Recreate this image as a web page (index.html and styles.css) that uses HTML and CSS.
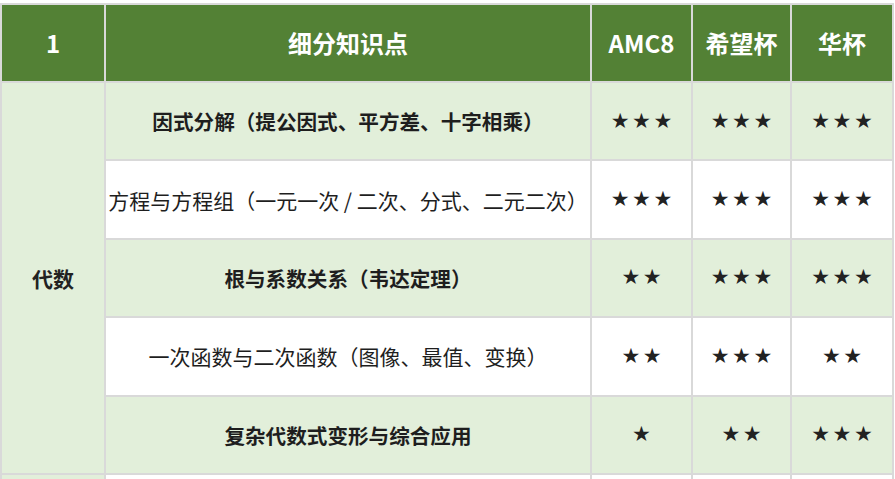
FILE: index.html
```html
<!DOCTYPE html>
<html lang="zh-CN">
<head>
<meta charset="utf-8">
<title>知识点难度表</title>
<link rel="stylesheet" href="styles.css">
</head>
<body>
<table class="grid">
  <colgroup>
    <col class="c-cat">
    <col class="c-topic">
    <col class="c-amc">
    <col class="c-xw">
    <col class="c-hb">
  </colgroup>
  <thead>
    <tr class="head">
      <th>1</th>
      <th>细分知识点</th>
      <th>AMC8</th>
      <th>希望杯</th>
      <th>华杯</th>
    </tr>
  </thead>
  <tbody>
    <tr class="tint">
      <td class="cat" rowspan="5">代数</td>
      <td class="topic strong">因式分解（提公因式、平方差、十字相乘）</td>
      <td class="stars">★★★</td>
      <td class="stars">★★★</td>
      <td class="stars">★★★</td>
    </tr>
    <tr class="plain">
      <td class="topic">方程与方程组（一元一次 / 二次、分式、二元二次）</td>
      <td class="stars">★★★</td>
      <td class="stars">★★★</td>
      <td class="stars">★★★</td>
    </tr>
    <tr class="tint">
      <td class="topic strong">根与系数关系（韦达定理）</td>
      <td class="stars">★★</td>
      <td class="stars">★★★</td>
      <td class="stars">★★★</td>
    </tr>
    <tr class="plain">
      <td class="topic">一次函数与二次函数（图像、最值、变换）</td>
      <td class="stars">★★</td>
      <td class="stars">★★★</td>
      <td class="stars">★★</td>
    </tr>
    <tr class="tint">
      <td class="topic strong">复杂代数式变形与综合应用</td>
      <td class="stars">★</td>
      <td class="stars">★★</td>
      <td class="stars">★★★</td>
    </tr>
    <tr class="plain">
      <td class="cat cat-next"></td>
      <td class="topic"></td>
      <td class="stars"></td>
      <td class="stars"></td>
      <td class="stars"></td>
    </tr>
  </tbody>
</table>
</body>
</html>
```

FILE: styles.css
```css
html {
  overflow: hidden;
}

body {
  margin: 0;
  padding-top: 3px;
  background: #ffffff;
  font-family: "Noto Sans CJK SC", "Noto Sans", sans-serif;
  color: #222222;
}

.grid {
  border-collapse: collapse;
  table-layout: fixed;
  width: 894px;
}

.c-cat { width: 104px; }
.c-topic { width: 486px; }
.c-amc { width: 101px; }
.c-xw { width: 99px; }
.c-hb { width: 102px; }

.grid th,
.grid td {
  border: 2px solid #d9d9d9;
  padding: 0;
  text-align: center;
  vertical-align: middle;
}

.head th {
  height: 76px;
  background: #538135;
  color: #ffffff;
  font-size: 24px;
  font-weight: 700;
  line-height: 1;
}

.grid tbody tr {
  height: 78.4px;
}

.tint td {
  background: #e2efda;
}

.plain td {
  background: #ffffff;
}

.grid td.cat {
  background: #e2efda;
  font-size: 21px;
  font-weight: 700;
}

.topic {
  font-size: 21px;
  font-weight: 400;
  color: #1e1e1e;
}

.topic.strong {
  font-size: 20.6px;
  font-weight: 700;
}

.stars {
  font-family: "DejaVu Sans", sans-serif;
  font-size: 21px;
  line-height: 1;
  letter-spacing: 2.5px;
  padding-left: 2.5px !important;
  color: #222222;
}
```
